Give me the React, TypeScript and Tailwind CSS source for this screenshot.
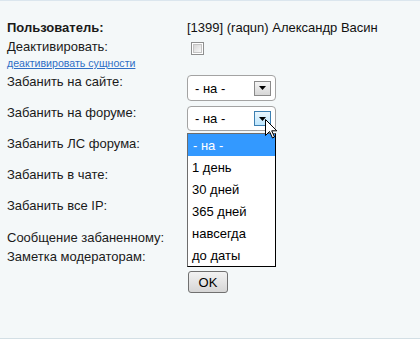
import React from "react";

function Arrow({ hover }: { hover?: boolean }) {
  return (
    <div
      className={
        hover
          ? "w-[17px] h-[15px] border border-[#3c7fb1] bg-gradient-to-b from-[#eaf6fd] to-[#bee6fd] flex items-center justify-center"
          : "w-[17px] h-[15px] border border-[#8a8a8a] bg-gradient-to-b from-[#f5f5f5] to-[#d6d6d6] flex items-center justify-center"
      }
    >
      <svg width="7" height="4" viewBox="0 0 7 4">
        <path d="M0 0 L7 0 L3.5 4 Z" fill="#000" />
      </svg>
    </div>
  );
}

function FakeSelect({ hover, h }: { hover?: boolean; h: string }) {
  return (
    <div
      className={`w-[89px] ${h} rounded-[4px] border border-[#a3a3a3] bg-white flex items-center justify-between pl-[7px] pr-[4px]`}
    >
      <span className="text-[13px] leading-[15px] text-black">- на -</span>
      <Arrow hover={hover} />
    </div>
  );
}

const labelCls = "w-[180px] shrink-0 text-[13px] leading-[15px] text-[#1a1a1a]";

export default function App() {
  return (
    <div
      className="relative w-[420px] h-[350px] bg-white"
      style={{ fontFamily: '"Liberation Sans", Arial, sans-serif' }}
    >
      <div className="h-[339px] bg-[#f4f8f9] border-t border-b border-t-[#dbe6ee] border-b-[#d3dfe5] pl-[7px] pt-[19px] flex flex-col">
        {/* Пользователь */}
        <div className="flex h-[19px]">
          <div className={`${labelCls} font-bold`}>Пользователь:</div>
          <div className="text-[13px] leading-[15px] text-[#111]">
            [1399] (raqun) Александр Васин
          </div>
        </div>
        {/* Деактивировать */}
        <div className="flex h-[18px]">
          <div className={labelCls}>Деактивировать:</div>
          <div className="mt-[3px] ml-[4px] w-[13px] h-[13px] border border-[#8e8f8f] bg-white flex items-center justify-center">
            <div className="w-[9px] h-[9px] border border-[#c4c4c4] bg-gradient-to-br from-[#d6d6d6] to-[#f8f8f8]" />
          </div>
        </div>
        {/* link */}
        <div className="flex h-[17px]">
          <span className="text-[10.6px] leading-[12px] text-[#2f6fc6] underline">
            деактивировать сущности
          </span>
        </div>
        {/* сайт */}
        <div className="flex h-[31px]">
          <div className={labelCls}>Забанить на сайте:</div>
          <div className="mt-[1px]">
            <FakeSelect h="h-[26px]" />
          </div>
        </div>
        {/* форум */}
        <div className="flex h-[31px]">
          <div className={labelCls}>Забанить на форуме:</div>
          <div className="mt-[1px]">
            <FakeSelect h="h-[25px]" hover />
          </div>
        </div>
        <div className="flex h-[31px]">
          <div className={labelCls}>Забанить ЛС форума:</div>
        </div>
        <div className="flex h-[31px]">
          <div className={labelCls}>Забанить в чате:</div>
        </div>
        <div className="flex h-[31px]">
          <div className={labelCls}>Забанить все IP:</div>
        </div>
        <div className="flex h-[20px] pt-[1px]">
          <div className={labelCls}>Сообщение забаненному:</div>
        </div>
        <div className="flex h-[22px]">
          <div className={labelCls}>Заметка модераторам:</div>
        </div>
        <div className="flex">
          <div className="w-[181px] shrink-0" />
          <button className="w-[40px] h-[22px] rounded-[3px] border border-[#707070] bg-gradient-to-b from-[#f2f2f2] to-[#d6d6d6] text-[13px] leading-[15px] text-black flex items-center justify-center">
            OK
          </button>
        </div>
      </div>

      {/* Dropdown list overlay */}
      <div className="absolute left-[187px] top-[133px] w-[89px] h-[134px] bg-white border border-black border-l-[#6d6d6d] border-t-[#6d6d6d] flex flex-col">
        {["- на -", "1 день", "30 дней", "365 дней", "навсегда", "до даты"].map((t, i) => (
          <div
            key={t}
            className={
              i === 0
                ? "h-[22px] bg-[#3399ff] text-white text-[13px] leading-[15px] flex items-center pl-[5px]"
                : "h-[22px] text-black text-[13px] leading-[15px] flex items-center pl-[4px]"
            }
          >
            {t}
          </div>
        ))}
      </div>

      {/* Mouse cursor */}
      <svg
        className="absolute left-[265px] top-[119px]"
        width="13"
        height="20"
        viewBox="0 0 13 20"
      >
        <path
          d="M0.5 0.5 L0.5 16.5 L4.5 12.5 L7.5 19 L9.5 18 L6.7 11.8 L11.8 11.8 Z"
          fill="#fff"
          stroke="#000"
          strokeWidth="1"
          strokeLinejoin="miter"
        />
      </svg>
    </div>
  );
}
